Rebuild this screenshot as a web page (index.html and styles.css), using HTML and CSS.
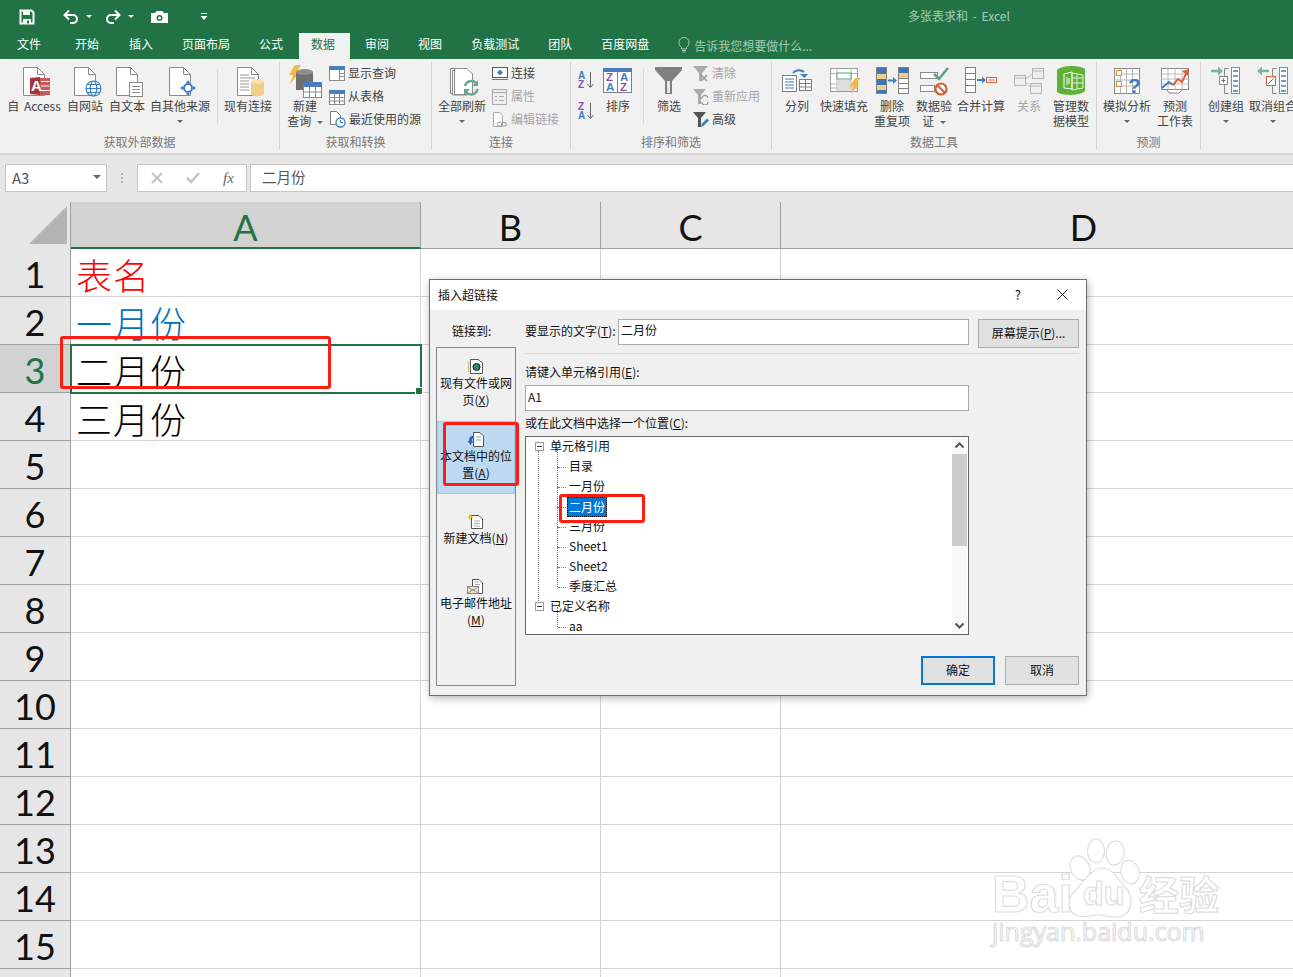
FILE: index.html
```html
<!DOCTYPE html>
<html lang="zh-CN">
<head>
<meta charset="utf-8">
<title>多张表求和 - Excel</title>
<link rel="stylesheet" href="styles.css">
</head>
<body>
<svg class="defs" aria-hidden="true"><defs>
  <g id="doc"><path d="M6.5 2.5H20.5L27.5 9.5V30.5H6.5Z" fill="#fff" stroke="#8a8a8a"/><path d="M20.5 2.5V9.5H27.5" fill="none" stroke="#8a8a8a"/></g>
  <g id="bolt"><path d="M7 0H13L9 7H12L2 19L5 10H1Z" fill="#f2b84b"/></g>
</defs></svg>

<header class="titlebar">
  <div class="qat">
    <svg class="q-save" width="16" height="16" viewBox="0 0 16 16"><path d="M1.5 1.5H12.5L14.5 3.5V14.5H1.5Z" fill="none" stroke="#fff" stroke-width="2"/><rect x="4" y="1" width="7" height="5" fill="#fff"/><rect x="4" y="10" width="8" height="5" fill="#fff"/><rect x="8" y="11.500" width="2" height="3" fill="#217346"/></svg>
    <svg class="q-undo" width="18" height="16" viewBox="0 0 18 16"><path d="M3 6H11A4 4 0 0 1 11 14H8" fill="none" stroke="#fff" stroke-width="2"/><path d="M7 1.500L2.500 6L7 10.500" fill="none" stroke="#fff" stroke-width="2"/></svg>
    <i class="caret white c-undo"></i>
    <svg class="q-redo" width="18" height="16" viewBox="0 0 18 16"><path d="M15 6H7A4 4 0 0 0 7 14H10" fill="none" stroke="#fff" stroke-width="2"/><path d="M11 1.500L15.500 6L11 10.500" fill="none" stroke="#fff" stroke-width="2"/></svg>
    <i class="caret white c-redo"></i>
    <svg class="q-cam" width="17" height="14" viewBox="0 0 17 14"><path d="M0 3H4L5.500 1H11.500L13 3H17V13H0Z" fill="#fff"/><circle cx="8.500" cy="8" r="3" fill="#217346"/><circle cx="8.500" cy="8" r="1.500" fill="#fff"/></svg>
    <svg class="q-more" width="8" height="8" viewBox="0 0 8 8"><rect x="1" y="0" width="6" height="1" fill="#fff"/><path d="M0.500 3H7.500L4 7Z" fill="#fff"/></svg>
  </div>
  <div class="doc-title">多张表求和 - Excel</div>
</header>

<nav class="tabs">
  <span class="tab first">文件</span>
  <span class="tab second">开始</span>
  <span class="tab">插入</span>
  <span class="tab">页面布局</span>
  <span class="tab">公式</span>
  <span class="tab active">数据</span>
  <span class="tab">审阅</span>
  <span class="tab">视图</span>
  <span class="tab">负载测试</span>
  <span class="tab">团队</span>
  <span class="tab">百度网盘</span>
  <span class="tell">
    <svg width="12" height="16" viewBox="0 0 12 16"><path d="M3.500 10.500C2 9 1 8 1 5.500A5 5 0 0 1 11 5.500C11 8 10 9 8.500 10.500V12H3.500Z" fill="none" stroke="#a8ccb8"/><path d="M4 13.500H8M4.500 15H7.500" stroke="#a8ccb8"/></svg>
    告诉我您想要做什么...
  </span>
</nav>

<section class="ribbon">
  <div class="group g1">
    <div class="items">
      <div class="btn w64">
        <svg width="34" height="34" viewBox="0 0 34 34"><use href="#doc"/><path d="M13 13L23 12V30L13 29Z" fill="#a4373a"/><path d="M23 13H33V30H23Z" fill="#c8595c"/><path d="M24 16.500H32.500M24 21H32.500M24 25.500H32.500" stroke="#fff"/><text x="14" y="26" class="svg-a">A</text></svg>
        <span>自 Access</span>
      </div>
      <div class="btn w38">
        <svg width="34" height="34" viewBox="0 0 34 34"><use href="#doc"/><g fill="#fff" stroke="#3f7fc1" stroke-width="1.200"><circle cx="25.500" cy="23.500" r="7.500"/><ellipse cx="25.500" cy="23.500" rx="3.200" ry="7.500"/><path d="M18 23.500H33M19 19.500H32M19 27.500H32" fill="none"/></g></svg>
        <span>自网站</span>
      </div>
      <div class="btn w46">
        <svg width="34" height="34" viewBox="0 0 34 34"><use href="#doc"/><rect x="19.500" y="17.500" width="13" height="14" fill="#fff" stroke="#8a8a8a"/><path d="M22 21.500H30M22 24.500H30M22 27.500H30" stroke="#8a8a8a"/></svg>
        <span>自文本</span>
      </div>
      <div class="btn w60">
        <svg width="34" height="34" viewBox="0 0 34 34"><use href="#doc"/><circle cx="25" cy="23" r="4" fill="#fff" stroke="#3f7fc1" stroke-width="2"/><path d="M25 15L27 18H23ZM25 31L23 28H27ZM17 23L20 21V25ZM33 23L30 25V21Z" fill="#3f7fc1"/></svg>
        <span>自其他来源</span>
        <i class="caret"></i>
      </div>
      <div class="sep s1"></div>
      <div class="btn w56">
        <svg width="34" height="34" viewBox="0 0 34 34"><use href="#doc"/><path d="M9 10H18M9 13H24M9 16H18M9 19H18M9 22H18M9 25H18" stroke="#9a9a9a"/><path d="M20 17V29C20 32 33 32 33 29V17Z" fill="#f0cf88"/><ellipse cx="26.500" cy="16.500" rx="6.500" ry="2.500" fill="#f7e1ae"/></svg>
        <span>现有连接</span>
      </div>
    </div>
    <div class="glabel">获取外部数据</div>
  </div>

  <div class="group g2">
    <div class="items">
      <div class="btn w48">
        <svg width="34" height="34" viewBox="0 0 34 34"><use href="#bolt"/><path d="M8 7V25H25V7Z" fill="#6f6f6f"/><ellipse cx="16.500" cy="7" rx="8.500" ry="3" fill="#8e8e8e"/><rect x="15.500" y="17.500" width="18" height="15" fill="#fff" stroke="#8a8a8a"/><rect x="15" y="17" width="19" height="5" fill="#4a7ebb"/><path d="M21.500 22V32M27.500 22V32M16 27H33" stroke="#8a8a8a"/></svg>
        <span>新建<br>查询 <i class="caret inline"></i></span>
      </div>
      <div class="smalls">
        <div class="small"><svg width="16" height="16" viewBox="0 0 16 16"><rect x=".5" y=".5" width="15" height="14" fill="#fff" stroke="#8a8a8a"/><rect y="0" width="16" height="4" fill="#4a7ebb"/><path d="M10.500 4V14M10.500 7.500H15M10.500 10.500H15" stroke="#8a8a8a"/></svg>显示查询</div>
        <div class="small"><svg width="16" height="16" viewBox="0 0 16 16"><rect x=".5" y="1.500" width="15" height="14" fill="#fff" stroke="#8a8a8a"/><rect y="1" width="16" height="4" fill="#4a7ebb"/><path d="M5.500 5V15M10.500 5V15M1 8.500H15M1 12H15" stroke="#8a8a8a"/></svg>从表格</div>
        <div class="small"><svg width="17" height="17" viewBox="0 0 17 17"><path d="M1.500 .5H7.500L11.500 4.500V13.500H1.500Z" fill="#fff" stroke="#7a7a7a"/><circle cx="11.500" cy="11.500" r="4.500" fill="#fff" stroke="#3f7fc1" stroke-width="1.300"/><path d="M11.500 9V11.500H14" fill="none" stroke="#3f7fc1"/></svg>最近使用的源</div>
      </div>
    </div>
    <div class="glabel">获取和转换</div>
  </div>

  <div class="group g3">
    <div class="items">
      <div class="btn w52">
        <svg width="34" height="34" viewBox="0 0 34 34"><path d="M5.500 3.500H20V28.500H5.500Z" fill="#fff" stroke="#8a8a8a"/><path d="M7.500 5.500H22V30H7.500Z" fill="#fff" stroke="#8a8a8a"/><path d="M9.500 3.500H22L27.500 9V29.500H9.500Z" fill="#fff" stroke="#8a8a8a"/><path d="M20 21A6.500 6.500 0 0 1 31 18" fill="none" stroke="#6aa88c" stroke-width="2.500"/><path d="M32.500 24A6.500 6.500 0 0 1 21 27" fill="none" stroke="#6aa88c" stroke-width="2.500"/><path d="M33 15V21H27ZM19 30V24H25Z" fill="#6aa88c"/></svg>
        <span>全部刷新</span>
        <i class="caret"></i>
      </div>
      <div class="smalls s3">
        <div class="small"><svg width="16" height="16" viewBox="0 0 16 16"><rect x=".5" y="1.500" width="15" height="10" fill="#fff" stroke="#555"/><path d="M8 3.500L11 6.500L8 9.500L5 6.500Z" fill="#3f7fc1"/><path d="M0 13.500H16" stroke="#777"/></svg>连接</div>
        <div class="small off"><svg width="16" height="16" viewBox="0 0 16 16"><rect x=".5" y=".5" width="14" height="15" fill="#eee" stroke="#aaa"/><path d="M0 3.500H15M7 7.500H12M7 11.500H12M3 7.500H5M3 11.500H5" stroke="#aaa"/></svg>属性</div>
        <div class="small off"><svg width="16" height="16" viewBox="0 0 16 16"><path d="M1.500 .5H7.500L10.500 3.500V14.500H1.500Z" fill="#fff" stroke="#aaa"/><rect x="5.500" y="10.500" width="5" height="3.500" rx="1.700" fill="none" stroke="#999"/><rect x="9.500" y="10.500" width="5" height="3.500" rx="1.700" fill="none" stroke="#999"/></svg>编辑链接</div>
      </div>
    </div>
    <div class="glabel">连接</div>
  </div>

  <div class="group g4">
    <div class="items">
      <div class="sorts">
        <svg width="16" height="18" viewBox="0 0 16 18"><text x="0" y="8" class="svg-s blue">A</text><text x="0" y="17" class="svg-s purple">Z</text><path d="M12.500 1V16M9.500 13L12.500 16.500L15.500 13" fill="none" stroke="#666"/></svg>
        <svg width="16" height="18" viewBox="0 0 16 18"><text x="0" y="8" class="svg-s purple">Z</text><text x="0" y="17" class="svg-s blue">A</text><path d="M12.500 1V16M9.500 13L12.500 16.500L15.500 13" fill="none" stroke="#666"/></svg>
      </div>
      <div class="btn w40">
        <svg width="34" height="34" viewBox="0 0 34 34"><rect x="2.500" y="3.500" width="28" height="24" fill="#fff" stroke="#7f7f7f"/><rect x="2" y="3" width="29" height="4" fill="#4a7ebb"/><path d="M16.500 7V27" stroke="#7f7f7f"/><text x="5" y="16" class="svg-z purple">Z</text><text x="5" y="26" class="svg-z blue">A</text><text x="19" y="16" class="svg-z blue">A</text><text x="19" y="26" class="svg-z purple">Z</text></svg>
        <span>排序</span>
      </div>
      <div class="sep s4"></div>
      <div class="btn w38">
        <svg width="34" height="34" viewBox="0 0 34 34"><path d="M3 2H30V5L20 16V29H13V16L3 5Z" fill="#808080"/><path d="M15 16V28H18V16Z" fill="#e4e4e4"/></svg>
        <span>筛选</span>
      </div>
      <div class="smalls s4b">
        <div class="small off"><svg width="16" height="16" viewBox="0 0 16 16"><path d="M0 0H15L9 7V15H6V7Z" fill="#aaa"/><path d="M8 9L14 15M14 9L8 15" stroke="#999" stroke-width="1.500"/></svg>清除</div>
        <div class="small off"><svg width="16" height="16" viewBox="0 0 16 16"><path d="M0 0H13L8 6V15H5V6Z" fill="#aaa"/><path d="M9 10A3 3 0 0 1 15 9M15 13A3 3 0 0 1 9 13" fill="none" stroke="#999" stroke-width="1.200"/></svg>重新应用</div>
        <div class="small"><svg width="16" height="16" viewBox="0 0 16 16"><path d="M0 0H13L8 6V15H5V6Z" fill="#555"/><path d="M8 15L9 11.500L14 6.500L16 8.500L11 13.500Z" fill="#3f7fc1"/></svg>高级</div>
      </div>
    </div>
    <div class="glabel">排序和筛选</div>
  </div>

  <div class="group g5">
    <div class="items">
      <div class="btn w42">
        <svg width="34" height="34" viewBox="0 0 34 34"><rect x="2.500" y="10.500" width="14" height="16" fill="#fff" stroke="#7f7f7f"/><path d="M5 14H14M5 17H14M5 20H14M5 23H14" stroke="#3f7fc1"/><rect x="19.500" y="14.500" width="12" height="11" fill="#fff" stroke="#7f7f7f"/><path d="M19.500 18.500H31.500M19.500 22H31.500M25.500 14.500V25.500" stroke="#7f7f7f"/><path d="M13 8A7 6 0 0 1 24 7" fill="none" stroke="#3f7fc1" stroke-width="2"/><path d="M20 9H28L24.500 13Z" fill="#3f7fc1"/></svg>
        <span>分列</span>
      </div>
      <div class="btn w52">
        <svg width="34" height="34" viewBox="0 0 34 34"><rect x="3.500" y="3.500" width="27" height="23" fill="#fff" stroke="#9a9a9a"/><path d="M3.500 8.500H30.500M3.500 19H30.500M3.500 23H30.500M10 3.500V26.500M24 3.500V26.500" stroke="#b5b5b5"/><rect x="10" y="8" width="14" height="6" fill="#fff" stroke="#5da17e"/><rect x="10.500" y="15" width="13" height="11" fill="#dedede"/><g transform="translate(22 13) scale(.85)"><use href="#bolt"/></g></svg>
        <span>快速填充</span>
      </div>
      <div class="btn w44">
        <svg width="34" height="34" viewBox="0 0 34 34"><rect x="1" y="2" width="11" height="27" fill="#7f7f7f"/><rect x="2" y="3" width="9" height="7" fill="#3f76b5"/><rect x="2" y="9" width="9" height="5" fill="#f0cf88"/><rect x="2" y="14" width="9" height="6" fill="#3f76b5"/><rect x="2" y="20" width="9" height="5" fill="#f0cf88"/><rect x="2" y="25" width="9" height="3" fill="#3f76b5"/><rect x="23.500" y="2.500" width="10" height="26" fill="#fff" stroke="#7f7f7f"/><rect x="24" y="3" width="9" height="5" fill="#3f76b5"/><rect x="24" y="8" width="9" height="5" fill="#f0cf88"/><path d="M24 13.500H33M24 18.500H33M24 23.500H33" stroke="#7f7f7f"/><path d="M13 15.500H19" stroke="#3f7fc1" stroke-width="2"/><path d="M18 12L22 15.500L18 19Z" fill="#3f7fc1"/></svg>
        <span>删除<br>重复项</span>
      </div>
      <div class="btn w40">
        <svg width="34" height="34" viewBox="0 0 34 34"><rect x="3.500" y="7.500" width="17" height="6" fill="#fff" stroke="#8a8a8a"/><rect x="3.500" y="20.500" width="14" height="6" fill="#fff" stroke="#8a8a8a"/><path d="M17 9L22 14L31 3" fill="none" stroke="#5da17e" stroke-width="2.500"/><circle cx="24" cy="24" r="5.500" fill="#fff" stroke="#d9603b" stroke-width="2.200"/><path d="M20 20L28 28" stroke="#d9603b" stroke-width="2.200"/></svg>
        <span>数据验<br>证 <i class="caret inline"></i></span>
      </div>
      <div class="btn w54">
        <svg width="34" height="34" viewBox="0 0 34 34"><rect x="1.500" y="2.500" width="10" height="25" fill="#fff" stroke="#7f7f7f"/><path d="M1.500 8.500H11.500M1.500 14.500H11.500M1.500 20.500H11.500" stroke="#7f7f7f"/><path d="M13 15H19" stroke="#3f7fc1" stroke-width="2"/><path d="M18 11.500L22 15L18 18.500Z" fill="#3f7fc1"/><rect x="22.500" y="12.500" width="10" height="5" fill="#fff" stroke="#d9603b"/><path d="M24.500 15H30.500" stroke="#d9603b"/></svg>
        <span>合并计算</span>
      </div>
      <div class="btn w42 off">
        <svg width="34" height="34" viewBox="0 0 34 34"><rect x="2.500" y="10.500" width="11" height="10" fill="#eee" stroke="#b5b5b5"/><rect x="20.500" y="3.500" width="11" height="10" fill="#eee" stroke="#b5b5b5"/><rect x="18.500" y="18.500" width="11" height="10" fill="#eee" stroke="#b5b5b5"/><path d="M2.500 13H13.500M20.500 6H31.500M18.500 21H29.500M13.500 14L20.500 9M13.500 17L18.500 22" stroke="#b5b5b5"/></svg>
        <span>关系</span>
      </div>
      <div class="btn w42">
        <svg width="34" height="34" viewBox="0 0 34 34"><path d="M3 5C8 0 26 0 31 4V26C26 31 8 31 3 27Z" fill="#5fb236"/><path d="M10 9L18 7V24L10 23Z" fill="none" stroke="#fff"/><path d="M18 8L29 10V23L18 25ZM18 13H29M18 18H29M23 9V24" fill="none" stroke="#e4f2d8"/><path d="M13 12V20M15 13V19" stroke="#fff"/></svg>
        <span>管理数<br>据模型</span>
      </div>
    </div>
    <div class="glabel">数据工具</div>
  </div>

  <div class="group g6">
    <div class="items">
      <div class="btn w54">
        <svg width="34" height="34" viewBox="0 0 34 34"><rect x="4.500" y="3.500" width="25" height="25" fill="#fff" stroke="#8a8a8a"/><path d="M4.500 9H29.500M4.500 15H29.500M4.500 21H29.500M10.500 3.500V28.500M16.500 3.500V28.500M22.500 3.500V28.500" stroke="#b5b5b5"/><rect x="6.500" y="5.500" width="5" height="5" fill="#fff" stroke="#e08a3a"/><rect x="6.500" y="16.500" width="5" height="5" fill="#fff" stroke="#e08a3a"/><text x="18" y="28" class="svg-q">?</text></svg>
        <span>模拟分析</span>
        <i class="caret"></i>
      </div>
      <div class="btn w42">
        <svg width="34" height="34" viewBox="0 0 34 34"><rect x="3.500" y="3.500" width="27" height="21" fill="#fff" stroke="#8a8a8a"/><path d="M3.500 9H30.500M3.500 14H30.500M3.500 19H30.500M10 3.500V24.500M17 3.500V24.500M24 3.500V24.500" stroke="#bbb"/><path d="M4 23L11 17L15 20" fill="none" stroke="#3f7fc1" stroke-width="2"/><path d="M15 20L20 14L24 17L29 7" fill="none" stroke="#d9603b" stroke-width="2"/><path d="M24 6L31 4L30 11Z" fill="#d9603b"/><path d="M9 25L11 28H21L24 25" fill="#fff" stroke="#8a8a8a"/></svg>
        <span>预测<br>工作表</span>
      </div>
    </div>
    <div class="glabel">预测</div>
  </div>

  <div class="group g7">
    <div class="items">
      <div class="btn w44">
        <svg width="34" height="34" viewBox="0 0 34 34"><path d="M2 6H11" stroke="#7fb39b" stroke-width="2.500"/><path d="M9 1.500L14 6L9 10.500Z" fill="#7fb39b"/><path d="M19.500 3.500H15.500V28.500H19.500" fill="none" stroke="#8a8a8a"/><rect x="10.500" y="11.500" width="8" height="8" fill="#fff" stroke="#8a8a8a"/><path d="M12.500 15.500H16.500M14.500 13.500V17.500" stroke="#666"/><rect x="22.500" y="2.500" width="8" height="26" fill="#fff" stroke="#8a8a8a"/><path d="M24 6H29M24 11H29M24 16H29M24 21H29M24 26H29" stroke="#3f7fc1" stroke-width="1.400"/></svg>
        <span>创建组</span>
        <i class="caret"></i>
      </div>
      <div class="btn w50">
        <svg width="34" height="34" viewBox="0 0 34 34"><path d="M4 6H13" stroke="#7fb39b" stroke-width="2.500"/><path d="M6 1.500L1 6L6 10.500Z" fill="#7fb39b"/><path d="M20.500 3.500H16.500V28.500H20.500" fill="none" stroke="#8a8a8a"/><rect x="10.500" y="11.500" width="9" height="9" fill="#fff" stroke="#d9603b"/><path d="M12 19L18 13" stroke="#d9603b"/><rect x="23.500" y="2.500" width="8" height="26" fill="#fff" stroke="#8a8a8a"/><path d="M25 6H30M25 11H30M25 16H30M25 21H30M25 26H30" stroke="#3f7fc1" stroke-width="1.400"/></svg>
        <span>取消组合</span>
        <i class="caret"></i>
      </div>
    </div>
  </div>
</section>

<section class="fbar">
  <div class="namebox"><span>A3</span><i class="caret big"></i></div>
  <div class="grip"><i></i><i></i><i></i></div>
  <div class="fbtns">
    <svg width="12" height="12" viewBox="0 0 12 12"><path d="M1 1L11 11M11 1L1 11" stroke="#c4c4c4" stroke-width="2"/></svg>
    <svg width="14" height="12" viewBox="0 0 14 12"><path d="M1 6L5 10L13 1" fill="none" stroke="#c4c4c4" stroke-width="2.500"/></svg>
    <span class="fx">fx</span>
  </div>
  <div class="finput">二月份</div>
</section>

<main class="sheet">
  <div class="hrow">
    <div class="corner"><svg width="40" height="40" viewBox="0 0 40 40"><path d="M39 1V39H1Z" fill="#b4b4b4"/></svg></div>
    <div class="ch cur ca">A</div><div class="ch cb">B</div><div class="ch cc">C</div><div class="ch cd">D</div>
  </div>
  <div class="row"><div class="rh">1</div><div class="cell ca red">表名</div><div class="cell cb"></div><div class="cell cc"></div><div class="cell cd"></div></div>
  <div class="row"><div class="rh">2</div><div class="cell ca blue-t">一月份</div><div class="cell cb"></div><div class="cell cc"></div><div class="cell cd"></div></div>
  <div class="row"><div class="rh cur">3</div><div class="cell ca sel">二月份</div><div class="cell cb"></div><div class="cell cc"></div><div class="cell cd"></div></div>
  <div class="row"><div class="rh">4</div><div class="cell ca">三月份</div><div class="cell cb"></div><div class="cell cc"></div><div class="cell cd"></div></div>
  <div class="row"><div class="rh">5</div><div class="cell ca"></div><div class="cell cb"></div><div class="cell cc"></div><div class="cell cd"></div></div>
  <div class="row"><div class="rh">6</div><div class="cell ca"></div><div class="cell cb"></div><div class="cell cc"></div><div class="cell cd"></div></div>
  <div class="row"><div class="rh">7</div><div class="cell ca"></div><div class="cell cb"></div><div class="cell cc"></div><div class="cell cd"></div></div>
  <div class="row"><div class="rh">8</div><div class="cell ca"></div><div class="cell cb"></div><div class="cell cc"></div><div class="cell cd"></div></div>
  <div class="row"><div class="rh">9</div><div class="cell ca"></div><div class="cell cb"></div><div class="cell cc"></div><div class="cell cd"></div></div>
  <div class="row"><div class="rh">10</div><div class="cell ca"></div><div class="cell cb"></div><div class="cell cc"></div><div class="cell cd"></div></div>
  <div class="row"><div class="rh">11</div><div class="cell ca"></div><div class="cell cb"></div><div class="cell cc"></div><div class="cell cd"></div></div>
  <div class="row"><div class="rh">12</div><div class="cell ca"></div><div class="cell cb"></div><div class="cell cc"></div><div class="cell cd"></div></div>
  <div class="row"><div class="rh">13</div><div class="cell ca"></div><div class="cell cb"></div><div class="cell cc"></div><div class="cell cd"></div></div>
  <div class="row"><div class="rh">14</div><div class="cell ca"></div><div class="cell cb"></div><div class="cell cc"></div><div class="cell cd"></div></div>
  <div class="row"><div class="rh">15</div><div class="cell ca"></div><div class="cell cb"></div><div class="cell cc"></div><div class="cell cd"></div></div>
  <div class="row"><div class="rh"></div><div class="cell ca"></div><div class="cell cb"></div><div class="cell cc"></div><div class="cell cd"></div></div>
</main>

<svg class="watermark" width="250" height="130" viewBox="0 0 250 130">
  <g class="wm">
    <ellipse cx="95" cy="33" rx="9.500" ry="12.500" transform="rotate(-25 95 33)"/>
    <ellipse cx="111" cy="16" rx="8.500" ry="12"/>
    <ellipse cx="130" cy="18" rx="9" ry="12" transform="rotate(8 130 18)"/>
    <ellipse cx="145" cy="37" rx="9" ry="12" transform="rotate(-15 145 37)"/>
    <path d="M118 33C128 33 132 44 140 52C150 62 148 82 130 82C122 82 118 80 112 80C106 80 100 83 93 81C83 78 81 64 90 56C98 48 106 33 118 33Z"/>
    <text x="98" y="70" class="wm-du">du</text>
    <text x="7" y="77" class="wm-bai">Bai</text>
    <text x="154" y="75" class="wm-jy">经验</text>
    <text x="7" y="106" class="wm-url">jingyan.baidu.com</text>
  </g>
</svg>

<div class="dialog">
  <div class="dlg-title">
    <span>插入超链接</span>
    <span class="help">?</span>
    <svg width="11" height="11" viewBox="0 0 11 11"><path d="M.5 .5L10.500 10.500M10.500 .5L.5 10.500" stroke="#222"/></svg>
  </div>
  <div class="dlg-body">
    <div class="dlg-left">
      <div class="link-label">链接到:</div>
      <div class="places">
        <div class="place">
          <svg width="18" height="17" viewBox="0 0 18 17"><path d="M3.500 1.500H11L15.500 5V15.500H3.500Z" fill="#fff" stroke="#555"/><path d="M1.500 3.500V14" stroke="#c9b778"/><circle cx="9.500" cy="9" r="3.500" fill="#2b8a64" stroke="#123"/></svg>
          <span>现有文件或网<br>页(<u>X</u>)</span>
        </div>
        <div class="place on">
          <svg width="18" height="17" viewBox="0 0 18 17"><path d="M6.500 1.500H13L16.500 5V15.500H6.500Z" fill="#fff" stroke="#555"/><path d="M9 6H14M9 9H14" stroke="#9aa"/><path d="M5 5A4 4 0 0 0 2 9V10H0.500L3.500 14L6.500 10H5V9A2 2 0 0 1 7 7V5Z" fill="#2a66c2"/></svg>
          <span>本文档中的位<br>置(<u>A</u>)</span>
        </div>
        <div class="place pad pad3">
          <svg width="18" height="17" viewBox="0 0 18 17"><path d="M4.500 2.500H12L15.500 6V15.500H4.500Z" fill="#fff" stroke="#555"/><path d="M7 8H13M7 10.500H13M7 13H13" stroke="#aaa"/><path d="M3 0L4 3L7 4L4 5L3 8L2 5L0 4L2 3Z" fill="#f0c020"/></svg>
          <span>新建文档(<u>N</u>)</span>
        </div>
        <div class="place pad">
          <svg width="18" height="17" viewBox="0 0 18 17"><path d="M5.500 1.500H12L15.500 5V15.500H5.500Z" fill="#fff" stroke="#555"/><path d="M8 4H12M8 6.500H13" stroke="#aaa"/><rect x=".5" y="8.500" width="11" height="7" fill="#efe6c8" stroke="#888"/><path d="M.5 8.500L6 12.500L11.500 8.500M.5 15.500L6 11.500L11.500 15.500" fill="none" stroke="#888"/></svg>
          <span>电子邮件地址<br>(<u>M</u>)</span>
        </div>
      </div>
    </div>
    <div class="dlg-right">
      <div class="top-row">
        <label class="lbl-t">要显示的文字(<u>T</u>):</label>
        <div class="field ftext">二月份</div>
        <div class="dbtn screentip">屏幕提示(<u>P</u>)...</div>
      </div>
      <div class="divider"></div>
      <div class="dlabel first">请键入单元格引用(<u>E</u>):</div>
      <div class="field fref">A1</div>
      <div class="dlabel">或在此文档中选择一个位置(<u>C</u>):</div>
      <div class="tree">
        <div class="tree-list">
          <div class="node root"><i class="box"></i>单元格引用</div>
          <div class="node leaf">目录</div>
          <div class="node leaf">一月份</div>
          <div class="node leaf"><span class="picked">二月份</span></div>
          <div class="node leaf">三月份</div>
          <div class="node leaf">Sheet1</div>
          <div class="node leaf">Sheet2</div>
          <div class="node leaf">季度汇总</div>
          <div class="node root"><i class="box"></i>已定义名称</div>
          <div class="node leaf">aa</div>
        </div>
        <div class="scroll">
          <svg width="15" height="17" viewBox="0 0 15 17"><path d="M3.500 10.500L7.500 6.500L11.500 10.500" fill="none" stroke="#555" stroke-width="2"/></svg>
          <div class="thumb"></div>
          <svg class="down" width="15" height="17" viewBox="0 0 15 17"><path d="M3.500 6.500L7.500 10.500L11.500 6.500" fill="none" stroke="#555" stroke-width="2"/></svg>
        </div>
      </div>
      <div class="dlg-foot">
        <div class="dbtn ok">确定</div>
        <div class="dbtn cancel">取消</div>
      </div>
    </div>
  </div>
</div>

<div class="mark m-cell"></div>
<div class="mark m-place"></div>
<div class="mark m-tree"></div>
</body>
</html>
```

FILE: styles.css
```css
* { box-sizing: border-box; }
html, body { margin: 0; padding: 0; }
body {
  position: relative;
  width: 1293px;
  height: 977px;
  overflow: hidden;
  background: #fff;
  font-family: "Noto Sans CJK SC", "Liberation Sans", sans-serif;
  font-size: 12px;
  color: #444;
}
.defs { position: absolute; width: 0; height: 0; }
svg { display: block; flex: none; }
i { font-style: normal; }

/* title bar */
.titlebar { height: 33px; background: #217346; display: flex; align-items: center; }
.qat { display: flex; align-items: center; width: 860px; padding-left: 19px; }
.q-undo { margin-left: 27px; }
.c-undo { margin: 0 0 0 6px; }
.q-redo { margin-left: 12px; }
.c-redo { margin: 0 0 0 6px; }
.q-cam { margin-left: 17px; }
.q-more { margin-left: 32px; }
.doc-title { margin-left: 48px; padding-bottom: 2px; color: #a9ccb9; font-size: 12px; word-spacing: 2px; }

.caret {
  display: block;
  width: 0;
  height: 0;
  border-left: 3px solid transparent;
  border-right: 3px solid transparent;
  border-top: 3px solid #666;
}
.caret.white { border-top-color: #fff; }
.caret.inline { display: inline-block; vertical-align: 2px; margin-left: 1px; }
.caret.big { border-left-width: 4px; border-right-width: 4px; border-top-width: 4px; }

/* tabs */
.tabs { height: 26px; background: #217346; display: flex; align-items: stretch; color: #fff; }
.tab { padding: 0 14px; line-height: 22px; flex: none; margin-right: 1px; }
.tab.first { padding-left: 17px; padding-right: 19px; }
.tab.second { margin-right: 2px; }
.tab.active { background: #f1f1f1; color: #217346; margin-left: 1px; padding: 0 15px 0 12px; }
.tell { display: flex; align-items: center; margin-left: 14px; padding-bottom: 2px; color: #a9ccb9; gap: 4px; height: 26px; }

/* ribbon */
.ribbon {
  height: 96px;
  padding-top: 3px;
  background: #f1f1f1;
  border-bottom: 2px solid #d6d6d6;
  display: flex;
  align-items: flex-start;
  overflow: hidden;
}
.group { height: 87px; flex: none; display: flex; flex-direction: column; border-right: 1px solid #d2d2d2; }
.g1 { width: 280px; padding-left: 2px; }
.g2 { width: 152px; padding-left: 1px; }
.g3 { width: 139px; padding-left: 4px; }
.g4 { width: 201px; padding-left: 7px; }
.g5 { width: 325px; padding-left: 4px; }
.g6 { width: 104px; padding-left: 3px; }
.g7 { width: 200px; padding-left: 3px; border-right: 0; }
.items { height: 74px; display: flex; align-items: flex-start; }
.glabel { height: 13px; line-height: 11px; text-align: center; color: #777; margin-left: -7px; }
.g1 .glabel { margin-left: -2px; }
.g2 .glabel { margin-left: -1px; }
.g3 .glabel { margin-left: -4px; }
.g5 .glabel { margin-left: -4px; }
.g6 .glabel { margin-left: -3px; }

.btn { flex: none; display: flex; flex-direction: column; align-items: center; padding-top: 3px; text-align: center; line-height: 15px; white-space: nowrap; color: #444; word-spacing: 2px; }
.btn > span { margin-top: -1px; }
.btn > .caret { margin-top: 7px; }
.btn.off { color: #a6a6a6; }
.w38 { width: 38px; } .w40 { width: 40px; } .w42 { width: 42px; } .w44 { width: 44px; }
.w46 { width: 46px; } .w48 { width: 48px; } .w50 { width: 50px; } .w52 { width: 52px; } .w54 { width: 54px; }
.w56 { width: 56px; } .w60 { width: 60px; } .w64 { width: 64px; }
.sep { width: 1px; height: 55px; margin-top: 7px; background: #d9d9d9; flex: none; }
.s1 { margin-left: 7px; margin-right: 2px; }
.s4 { margin-left: 5px; margin-right: 6px; }

.smalls { display: flex; flex-direction: column; flex: none; }
.s3 { margin-left: 4px; }
.s4b { margin-left: 5px; }
.small { height: 23px; padding-bottom: 2px; display: flex; align-items: center; gap: 3px; white-space: nowrap; color: #444; }
.small > svg { margin-top: 2px; }
.small.off { color: #a6a6a6; }
.sorts { display: flex; flex-direction: column; gap: 13px; padding-top: 9px; margin-right: 4px; }

.svg-a { font: bold 15px "Liberation Sans", sans-serif; fill: #fff; }
.svg-s { font: bold 10px "Liberation Sans", sans-serif; }
.svg-z { font: bold 11.500px "Liberation Sans", sans-serif; }
.svg-q { font: bold 21px "Liberation Sans", sans-serif; fill: #3f7fc1; }
.blue { fill: #3f7fc1; }
.purple { fill: #8a4fb0; }

/* formula bar */
.fbar { height: 47px; background: #e6e6e6; display: flex; align-items: flex-start; padding: 9px 0 0 5px; }
.namebox {
  width: 102px; height: 28px; background: #fff; border: 1px solid #c6c6c6;
  display: flex; align-items: center; justify-content: space-between; padding: 0 5px 2px 6px;
  font-size: 15px; color: #555;
}
.grip { width: 30px; height: 28px; display: flex; flex-direction: column; align-items: center; justify-content: center; gap: 2px; }
.grip i { width: 2px; height: 2px; background: #b5b5b5; }
.fbtns {
  width: 110px; height: 28px; background: #fff; border: 1px solid #c6c6c6;
  display: flex; align-items: center; padding-left: 13px; gap: 23px;
}
.fx { font: italic 15px "Liberation Serif", serif; color: #666; }
.finput {
  flex: 1; height: 28px; margin-left: 3px; background: #fff; border: 1px solid #c6c6c6; border-right: 0;
  padding-left: 11px; font-size: 14.500px; line-height: 23px; color: #555;
}

/* sheet */
.sheet { height: 775px; overflow: hidden; }
.hrow { display: flex; height: 47px; width: 1387px; background: #e6e6e6; }
.corner { width: 71px; flex: none; padding: 3px 0 0 28px; border-right: 1px solid #a0a0a0; }
.ch {
  flex: none; text-align: center; font: 36px/50px "Lato", "Liberation Sans", sans-serif; color: #111;
  border-right: 1px solid #a0a0a0; border-bottom: 1px solid #a0a0a0;
}
.ch.cur { background: #d2d2d2; color: #217346; border-bottom: 2px solid #217346; }
.ca { width: 350px; } .cb { width: 180px; } .cc { width: 180px; } .cd { width: 606px; }
.row { display: flex; height: 48px; width: 1387px; }
.rh {
  width: 71px; flex: none; background: #e6e6e6; text-align: center;
  font: 36px/51px "Lato", "Liberation Sans", sans-serif; color: #111;
  border-right: 1px solid #a0a0a0; border-bottom: 1px solid #a0a0a0;
}
.rh.cur { background: #d2d2d2; color: #217346; }
.cell {
  flex: none; border-right: 1px solid #d4d4d4; border-bottom: 1px solid #d4d4d4;
  padding-left: 5px; font-size: 36px; font-weight: 300; line-height: 50px; letter-spacing: 1px; color: #000; white-space: nowrap;
}
.cell.red { color: #ff0000; }
.cell.blue-t { color: #0070c0; }
.cell.sel { position: relative; outline: 2px solid #217346; outline-offset: -1px; z-index: 1; }
.cell.sel::after {
  content: ""; position: absolute; right: -3px; bottom: -3px; width: 6px; height: 6px;
  background: #217346; border: 1px solid #fff;
}

/* watermark */
.watermark { position: absolute; left: 985px; top: 835px; }
.wm { fill: #fff; stroke: #dedede; stroke-width: 1.200; }
.wm-bai { font: bold 52px "Liberation Sans", sans-serif; }
.wm-du { font: bold 34px "Liberation Sans", sans-serif; }
.wm-jy { font: bold 40px "Noto Sans CJK SC", sans-serif; }
.wm-url { font: 25px "Open Sans", sans-serif; }

/* dialog */
.dialog {
  position: absolute; left: 429px; top: 279px; width: 658px; height: 417px;
  background: #f0f0f0; border: 1px solid #6f6f6f; box-shadow: 1px 2px 8px rgba(0,0,0,.3);
  color: #111; z-index: 5;
}
.dlg-title { height: 30px; background: #fff; display: flex; align-items: center; padding: 0 18px 2px 8px; }
.dlg-title span:first-child { flex: 1; }
.help { margin-right: 36px; font-size: 13px; }
.dlg-body { display: flex; padding: 9px 0 0 6px; }
.dlg-left { width: 80px; flex: none; }
.link-label { height: 28px; line-height: 24px; padding-left: 16px; white-space: nowrap; }
.places { height: 339px; border: 1px solid #828790; background: #f0f0f0; }
.place { height: 73px; padding-top: 9px; display: flex; flex-direction: column; align-items: center; text-align: center; line-height: 17px; white-space: nowrap; border: 1px solid transparent; }
.place.on { background: #bcdaf2; border-color: #99cdf2; }
.place.pad { height: 64px; padding-top: 18px; }
.place.pad3 { height: 65px; }
.place span { margin-top: -1px; }
.dlg-right { width: 554px; margin-left: 9px; flex: none; display: flex; flex-direction: column; }
.top-row { display: flex; height: 29px; }
.lbl-t { width: 93px; line-height: 24px; white-space: nowrap; }
.field { background: #fff; border: 1px solid #a9a9a9; height: 26px; line-height: 22px; padding-left: 2px; }
.ftext { width: 351px; line-height: 20px; }
.fref { width: 444px; margin-top: 5px; }
.dbtn { background: #e1e1e1; border: 1px solid #adadad; text-align: center; line-height: 25px; }
.screentip { width: 101px; margin-left: 9px; height: 29px; }
.divider { height: 1px; margin-top: 5px; background: #dcdcdc; }
.dlabel { height: 15px; line-height: 13px; margin-top: 5px; white-space: nowrap; }
.dlabel.first { margin-top: 11px; }

.tree { width: 444px; height: 199px; margin-top: 5px; background: #fff; border: 1px solid #666; display: flex; padding-right: 1px; overflow: hidden; }
.tree-list { position: relative; flex: 1; overflow: hidden; }
.tree-list::before { content: ""; position: absolute; left: 12px; top: 14px; height: 156px; border-left: 1px dotted #777; }
.node { position: relative; height: 20px; line-height: 18px; white-space: nowrap; color: #111; }
.node.root { padding-left: 24px; }
.node.leaf { padding-left: 43px; }
.node.leaf::before { content: ""; position: absolute; left: 31px; top: -10px; height: 20px; border-left: 1px dotted #777; }
.node.leaf::after { content: ""; position: absolute; left: 32px; top: 10px; width: 8px; border-top: 1px dotted #777; }
.box { position: absolute; z-index: 1; left: 9px; top: 5px; width: 9px; height: 9px; background: #fff; border: 1px solid #999; }
.box::after { content: ""; position: absolute; left: 1px; top: 3px; width: 5px; height: 1px; background: #333; }
.picked { display: inline-block; height: 20px; line-height: 18px; padding: 0 1px; margin-left: -2px; background: #0078d7; color: #fff; border: 1px dotted #000; }
.scroll { width: 15px; flex: none; background: #f8f8f8; display: flex; flex-direction: column; }
.thumb { height: 92px; background: #cdcdcd; }
.down { margin-top: auto; }
.dlg-foot { display: flex; justify-content: flex-end; gap: 10px; margin-top: 21px; }
.dlg-foot .dbtn { width: 74px; height: 29px; }
.dbtn.ok { border: 2px solid #0078d7; line-height: 23px; }

/* red annotation boxes */
.mark { position: absolute; border: 3px solid #ff1d12; border-radius: 3px; z-index: 6; }
.m-cell { left: 60px; top: 336px; width: 271px; height: 53px; }
.m-place { left: 443px; top: 422px; width: 76px; height: 64px; }
.m-tree { left: 559px; top: 494px; width: 86px; height: 29px; }
```
